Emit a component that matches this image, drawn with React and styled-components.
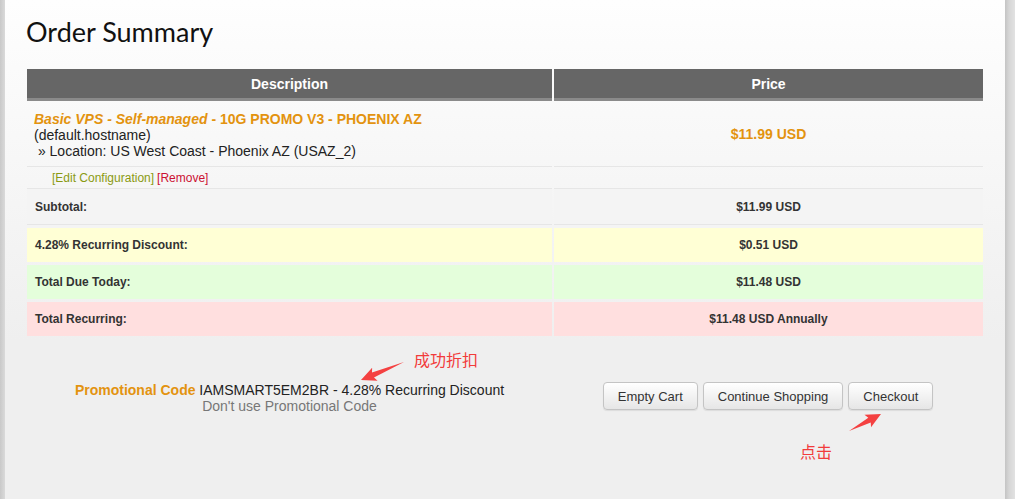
import styled, { createGlobalStyle } from 'styled-components';

const GlobalStyle = createGlobalStyle`
  html, body, #root {
    margin: 0;
    height: 100%;
  }
  body {
    font-family: 'Liberation Sans', Arial, sans-serif;
    color: #222;
  }
`;

const ORANGE = '#e3930f';

const StyledPage = styled.div`
  display: flex;
  height: 100vh;
  overflow: hidden;
`;

const StyledLeftEdge = styled.div`
  width: 5px;
  background: linear-gradient(to right, #c9c9c9, #dadada);
`;

const StyledRightEdge = styled.div`
  width: 10px;
  background: linear-gradient(to right, #c4c4c4, #d6d6d6 40%, #e2e2e2);
`;

const StyledPanel = styled.div`
  position: relative;
  width: 1000px;
  padding: 16px 22px 0;
  box-sizing: border-box;
  background: linear-gradient(#fefefe 0, #efefef 340px, #efefef 100%);
`;

const StyledTitle = styled.h1`
  margin: 0 0 21px -1px;
  font-family: Lato, 'Open Sans', sans-serif;
  font-weight: 400;
  font-size: 27px;
  line-height: 32px;
  color: #111;
`;

const StyledRow = styled.div`
  display: grid;
  grid-template-columns: 525px 429px;
  column-gap: 2px;
  margin-top: ${(p) => p.$gap || 0}px;
`;

const StyledHead = styled.div`
  height: 29px;
  border-bottom: 3px solid #8a8a8a;
  background: #666;
  color: #fff;
  font-weight: bold;
  font-size: 14px;
  display: flex;
  align-items: center;
  justify-content: center;
`;

const StyledItemCell = styled.div`
  height: 55px;
  padding: 10px 7px 0;
  border-bottom: 1px solid #e6e6e6;
  font-size: 14px;
  line-height: 16px;
  display: flex;
  flex-direction: column;
  justify-content: ${(p) => (p.$center ? 'center' : 'flex-start')};
  align-items: ${(p) => (p.$center ? 'center' : 'flex-start')};
  ${(p) => p.$center && 'padding-top: 0; height: 65px;'}
`;

const StyledProduct = styled.span`
  color: ${ORANGE};
  font-weight: bold;
  em {
    font-style: italic;
  }
`;

const StyledPrice = styled.span`
  color: ${ORANGE};
  font-weight: bold;
  font-size: 14px;
`;

const StyledEditCell = styled.div`
  height: 21px;
  padding-left: 25px;
  border-bottom: 1px solid #e6e6e6;
  font-size: 12px;
  display: flex;
  align-items: center;
  gap: 3px;
`;

const StyledLink = styled.a`
  color: ${(p) => p.$color};
  text-decoration: none;
`;

const StyledTotalCell = styled.div`
  height: ${(p) => p.$height || 34}px;
  background: ${(p) => p.$bg};
  border-bottom: ${(p) => (p.$line ? '1px solid #e6e6e6' : 'none')};
  font-size: 12px;
  font-weight: bold;
  color: #333;
  display: flex;
  align-items: center;
  justify-content: ${(p) => (p.$center ? 'center' : 'flex-start')};
  padding-left: ${(p) => (p.$center ? 0 : 8)}px;
`;

const StyledFooter = styled.div`
  display: grid;
  grid-template-columns: 525px 429px;
  column-gap: 2px;
  padding-top: 46px;
`;

const StyledPromo = styled.div`
  text-align: center;
  font-size: 14px;
  line-height: 16px;
  color: #222;
  b {
    color: ${ORANGE};
  }
`;

const StyledNoPromo = styled.div`
  color: #777;
`;

const StyledButtons = styled.div`
  display: flex;
  justify-content: center;
  gap: 5px;
  padding-right: 1px;
`;

const StyledButton = styled.button`
  height: 28px;
  padding: 0 14px;
  border: 1px solid #c4c4c4;
  border-radius: 4px;
  background: linear-gradient(#ffffff, #e6e6e6);
  box-shadow: 0 1px 1px rgba(0, 0, 0, 0.08);
  font-family: 'Liberation Sans', Arial, sans-serif;
  font-size: 13px;
  color: #333;
`;

const StyledNote = styled.div`
  position: absolute;
  left: ${(p) => p.$x}px;
  top: ${(p) => p.$y}px;
  font-family: 'Noto Sans CJK SC', sans-serif;
  font-size: 16px;
  line-height: 18px;
  color: #f23b3b;
`;

const StyledOverlay = styled.svg`
  position: absolute;
  left: 0;
  top: 0;
  pointer-events: none;
`;

const arrowShape = (len) =>
  `0,0 ${len - 13},-2.6 ${len - 15},-7 ${len},0 ${len - 15},7 ${len - 13},2.6`;

const Arrow = ({ x1, y1, x2, y2 }) => {
  const dx = x2 - x1;
  const dy = y2 - y1;
  const len = Math.hypot(dx, dy);
  const angle = (Math.atan2(dy, dx) * 180) / Math.PI;
  return (
    <polygon
      points={arrowShape(len)}
      fill="#f44141"
      transform={`translate(${x1} ${y1}) rotate(${angle})`}
    />
  );
};

const totals = [
  ['Subtotal:', '$11.99 USD', '#f4f4f4'],
  ['4.28% Recurring Discount:', '$0.51 USD', '#ffffd5'],
  ['Total Due Today:', '$11.48 USD', '#e4fedb'],
  ['Total Recurring:', '$11.48 USD Annually', '#ffdfdf'],
];

const App = () => {
  return (
    <StyledPage>
      <GlobalStyle />
      <StyledLeftEdge />
      <StyledPanel>
        <StyledTitle>Order Summary</StyledTitle>

        <StyledRow>
          <StyledHead>Description</StyledHead>
          <StyledHead>Price</StyledHead>
        </StyledRow>

        <StyledRow>
          <StyledItemCell>
            <StyledProduct>
              <em>Basic VPS - Self-managed</em> - 10G PROMO V3 - PHOENIX AZ
            </StyledProduct>
            <span>(default.hostname)</span>
            <span>&nbsp;» Location: US West Coast - Phoenix AZ (USAZ_2)</span>
          </StyledItemCell>
          <StyledItemCell $center>
            <StyledPrice>$11.99 USD</StyledPrice>
          </StyledItemCell>
        </StyledRow>

        <StyledRow>
          <StyledEditCell>
            <StyledLink $color="#8a9a12">[Edit Configuration]</StyledLink>
            <StyledLink $color="#cc1133">[Remove]</StyledLink>
          </StyledEditCell>
          <StyledEditCell />
        </StyledRow>

        {totals.map(([label, amount, bg], i) => (
          <StyledRow key={label} $gap={i === 0 ? 0 : 3}>
            <StyledTotalCell $bg={bg} $height={i === 0 ? 35 : 34} $line={i === 0}>
              {label}
            </StyledTotalCell>
            <StyledTotalCell $bg={bg} $height={i === 0 ? 35 : 34} $line={i === 0} $center>
              {amount}
            </StyledTotalCell>
          </StyledRow>
        ))}

        <StyledFooter>
          <StyledPromo>
            <div>
              <b>Promotional Code</b> IAMSMART5EM2BR - 4.28% Recurring Discount
            </div>
            <StyledNoPromo>Don't use Promotional Code</StyledNoPromo>
          </StyledPromo>
          <StyledButtons>
            <StyledButton>Empty Cart</StyledButton>
            <StyledButton>Continue Shopping</StyledButton>
            <StyledButton>Checkout</StyledButton>
          </StyledButtons>
        </StyledFooter>

        <StyledOverlay width="1000" height="499">
          <Arrow x1={399} y1={362} x2={356} y2={380} />
          <Arrow x1={844} y1={431} x2={876} y2={414} />
        </StyledOverlay>
        <StyledNote $x={409} $y={350}>成功折扣</StyledNote>
        <StyledNote $x={795} $y={442}>点击</StyledNote>
      </StyledPanel>
      <StyledRightEdge />
    </StyledPage>
  );
};

export default App;
